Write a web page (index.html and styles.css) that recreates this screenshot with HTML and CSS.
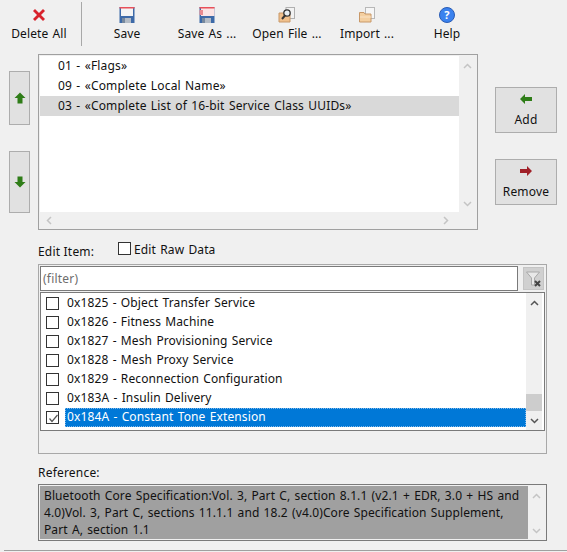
FILE: index.html
```html
<!DOCTYPE html>
<html lang="en">
<head>
    <meta charset="UTF-8">
    <title>Advertising Data Editor</title>
    <link rel="stylesheet" href="styles.css">
</head>
<body>

<div class="toolbar">
    <div class="tool tool-first">
        <svg width="16" height="16" viewBox="0 0 16 16"><path d="M2 4 4 2 8 6 12 2 14 4 10 8 14 12 12 14 8 10 4 14 2 12 6 8Z" fill="#d8222c"/></svg>
        <span>Delete All</span>
    </div>
    <div class="tool-sep"></div>
    <div class="tool">
        <svg width="16" height="16" viewBox="0 0 16 16"><rect x="0.500" y="0" width="15" height="16" fill="#3d6aa8"/><rect x="2" y="0" width="12" height="9" fill="#f4f4f4"/><rect x="0.500" y="0" width="15" height="1.500" fill="#e8505a"/><rect x="3" y="11" width="9" height="5" fill="#b4bcc6"/><rect x="3" y="11" width="3" height="5" fill="#76889e"/></svg>
        <span>Save</span>
    </div>
    <div class="tool">
        <svg width="16" height="16" viewBox="0 0 16 16"><rect x="0.500" y="0" width="15" height="16" fill="#3d6aa8"/><rect x="2" y="0" width="13.500" height="9" fill="#fbe4e4"/><rect x="0.500" y="0" width="15" height="1.500" fill="#e8505a"/><rect x="0.500" y="3" width="3.500" height="5" fill="#e88a90"/><rect x="3" y="11" width="9" height="5" fill="#b4bcc6"/><rect x="3" y="11" width="3" height="5" fill="#76889e"/></svg>
        <span>Save As ...</span>
    </div>
    <div class="tool">
        <svg width="18" height="16" viewBox="0 0 18 16"><rect x="8" y="0.500" width="8.500" height="11" fill="#f2f2f2" stroke="#b0b0b0"/><path d="M1 6H6L7 7.500H12V15H1Z" fill="#f0c08c" stroke="#c89868"/><circle cx="9" cy="6" r="3.200" fill="#e8eef2" stroke="#333" stroke-width="1.300"/><path d="M7 8.500 4 12" stroke="#333" stroke-width="2"/></svg>
        <span>Open File ...</span>
    </div>
    <div class="tool">
        <svg width="16" height="16" viewBox="0 0 16 16"><rect x="6.500" y="0.500" width="9" height="11" fill="#f6f6f6" stroke="#b8b8b8"/><path d="M0.500 5.500H5L6 7H12V15H0.500Z" fill="#f4cfa0" stroke="#c89868"/><path d="M1 10H12" stroke="#fae3c6"/></svg>
        <span>Import ...</span>
    </div>
    <div class="tool">
        <svg width="16" height="16" viewBox="0 0 16 16"><circle cx="8" cy="8" r="7.500" fill="#3b82ee" stroke="#2a5cb4"/><text x="8" y="12" class="help-mark">?</text></svg>
        <span>Help</span>
    </div>
</div>

<div class="top">
    <div class="move-col">
        <div class="btn move-up"><svg class="arrow" width="12" height="12" viewBox="0 0 12 12"><path d="M6 .5 11.500 6H8.500V11.500H3.500V6H.5Z" fill="#2f7d18"/></svg></div>
        <div class="btn move-down"><svg class="arrow" width="12" height="12" viewBox="0 0 12 12"><path d="M6 11.500 11.500 6H8.500V.5H3.500V6H.5Z" fill="#2f7d18"/></svg></div>
    </div>

    <div class="item-box">
        <div class="item-main">
            <ul class="item-list">
                <li>01 - «Flags»</li>
                <li>09 - «Complete Local Name»</li>
                <li class="current">03 - «Complete List of 16-bit Service Class UUIDs»</li>
            </ul>
            <div class="vbar">
                <svg class="chev" width="9" height="6" viewBox="0 0 9 6"><path d="M1 5 4.500 1.500 8 5" fill="none" stroke="#c4c4c4" stroke-width="1.500"/></svg>
                <svg class="chev" width="9" height="6" viewBox="0 0 9 6"><path d="M1 1 4.500 4.500 8 1" fill="none" stroke="#c4c4c4" stroke-width="1.500"/></svg>
            </div>
        </div>
        <div class="hbar">
            <svg width="6" height="9" viewBox="0 0 6 9"><path d="M5 1 1.500 4.500 5 8" fill="none" stroke="#c4c4c4" stroke-width="1.500"/></svg>
            <svg width="6" height="9" viewBox="0 0 6 9"><path d="M1 1 4.500 4.500 1 8" fill="none" stroke="#c4c4c4" stroke-width="1.500"/></svg>
        </div>
    </div>

    <div class="action-col">
        <div class="btn action">
            <svg width="12" height="10" viewBox="0 0 12 10"><path d="M0 5 5 0V3H12V7H5V10Z" fill="#2f7d18"/></svg>
            <span>Add</span>
        </div>
        <div class="btn action">
            <svg width="12" height="10" viewBox="0 0 12 10"><path d="M12 5 7 0V3H0V7H7V10Z" fill="#a02028"/></svg>
            <span>Remove</span>
        </div>
    </div>
</div>

<div class="edit-head">
    <span class="edit-label">Edit Item:</span>
    <label class="raw"><span class="check"></span><span class="raw-text">Edit Raw Data</span></label>
</div>

<div class="edit-box">
    <div class="filter-row">
        <div class="filter-input">(filter)</div>
        <div class="filter-btn">
            <svg width="18" height="18" viewBox="0 0 18 18"><path d="M1.500 2H14.500L9.500 8V15H6.500V8Z" fill="#e8e8e8" stroke="#a8a8a8"/><path d="M10 11 15 16M15 11 10 16" stroke="#444" stroke-width="2"/></svg>
        </div>
    </div>
    <div class="check-list">
        <ul class="services">
            <li><span class="check"></span><span class="name">0x1825 - Object Transfer Service</span></li>
            <li><span class="check"></span><span class="name">0x1826 - Fitness Machine</span></li>
            <li><span class="check"></span><span class="name">0x1827 - Mesh Provisioning Service</span></li>
            <li><span class="check"></span><span class="name">0x1828 - Mesh Proxy Service</span></li>
            <li><span class="check"></span><span class="name">0x1829 - Reconnection Configuration</span></li>
            <li><span class="check"></span><span class="name">0x183A - Insulin Delivery</span></li>
            <li class="picked">
                <span class="check"><svg width="13" height="13" viewBox="0 0 13 13"><path d="M2.500 6.500 5 9.500 10.500 3" fill="none" stroke="#555" stroke-width="1.200"/></svg></span>
                <span class="name">0x184A - Constant Tone Extension</span>
            </li>
        </ul>
        <div class="vbar vbar-dark">
            <svg class="chev" width="9" height="6" viewBox="0 0 9 6"><path d="M1 5 4.500 1.500 8 5" fill="none" stroke="#555" stroke-width="1.500"/></svg>
            <div class="thumb"></div>
            <svg class="chev" width="9" height="6" viewBox="0 0 9 6"><path d="M1 1 4.500 4.500 8 1" fill="none" stroke="#555" stroke-width="1.500"/></svg>
        </div>
    </div>
</div>

<div class="ref-label">Reference:</div>
<div class="ref-box">
    <div class="ref-text">Bluetooth Core Specification:Vol. 3, Part C, section 8.1.1 (v2.1 + EDR, 3.0 + HS and 4.0)Vol. 3, Part C, sections 11.1.1 and 18.2 (v4.0)Core Specification Supplement, Part A, section 1.1</div>
    <div class="vbar">
        <svg class="chev" width="9" height="6" viewBox="0 0 9 6"><path d="M1 5 4.500 1.500 8 5" fill="none" stroke="#c4c4c4" stroke-width="1.500"/></svg>
        <svg class="chev" width="9" height="6" viewBox="0 0 9 6"><path d="M1 1 4.500 4.500 8 1" fill="none" stroke="#c4c4c4" stroke-width="1.500"/></svg>
    </div>
</div>
<div class="bottom-line"></div>

</body>
</html>
```

FILE: styles.css
```css
/*reset*/
*{margin: 0;padding: 0;list-style: none;box-sizing: border-box;}
html,body{height: 552px;overflow: hidden;}
body{background: #f0f0f0;color: #111;font: 12px/16px "Noto Sans","Open Sans",sans-serif;}

/*toolbar*/
.toolbar{display: flex;height: 48px;padding-top: 2px;}
.tool{width: 80px;display: flex;flex-direction: column;align-items: center;padding-top: 5px;gap: 3px;letter-spacing: .1px;word-spacing: 1px;}
.tool svg{height: 16px;}
.tool-first{width: 78px;}
.tool-sep{width: 1px;height: 44px;background: #a8a8a8;margin: 0 5px 0 3px;}
.help-mark{font: bold 11px "Noto Sans",sans-serif;fill: #fff;text-anchor: middle;}

/*top part: move buttons, list, add/remove*/
.top{display: flex;height: 176px;margin-top: 6px;padding-left: 9px;}
.btn{background: #e1e1e1;border: 1px solid #adadad;display: flex;align-items: center;justify-content: center;}
.move-col{width: 21px;margin-right: 8px;display: flex;flex-direction: column;padding-top: 17px;gap: 26px;}
.move-up{height: 54px;}
.move-down{height: 62px;}
.item-box{width: 440px;border: 1px solid #a0a0a0;background: #f0f0f0;padding: 1px;display: flex;flex-direction: column;}
.item-main{flex: 1;display: flex;min-height: 0;}
.item-list{flex: 1;background: #fff;letter-spacing: .16px;word-spacing: 1px;}
.item-list li{height: 20px;line-height: 20px;padding-left: 18px;}
.item-list li.current{background: #d9d9d9;margin-right: 0;}
.vbar{width: 17px;display: flex;flex-direction: column;justify-content: space-between;align-items: center;padding: 7px 0 5px;background: #f0f0f0;}
.hbar{height: 16px;display: flex;justify-content: space-between;align-items: center;padding: 0 27px 0 6px;background: #f0f0f0;}
.action-col{margin-left: 17px;width: 62px;display: flex;flex-direction: column;padding-top: 33px;gap: 26px;}
.action{height: 46px;flex-direction: column;gap: 8px;font-size: 12px;padding-top: 4px;letter-spacing: .2px;}
.action svg{margin-top: -2px;}

/*edit item*/
.edit-head{display: flex;height: 34px;padding: 12px 0 0 38px;}
.edit-label{width: 80px;padding-top: 2px;letter-spacing: .2px;}
.raw{display: flex;align-items: flex-start;gap: 3px;}
.raw-text{letter-spacing: .12px;word-spacing: 1px;}
.check{width: 13px;height: 13px;border: 1px solid #333;background: #fff;display: block;flex: none;}
.edit-box{margin-left: 38px;width: 509px;height: 190px;border: 1px solid #a8a8a8;padding: 1px;}
.filter-row{display: flex;height: 26px;}
.filter-input{width: 478px;height: 25px;border: 1px solid #7a7a7a;background: #fff;color: #6d6d6d;line-height: 23px;padding-left: 2px;letter-spacing: .2px;}
.filter-btn{width: 21px;height: 23px;margin: 1px 0 0 5px;background: #d0d0d0;border: 1px solid #c4c4c4;display: flex;align-items: center;justify-content: center;}
.check-list{width: 505px;height: 139px;border: 1px solid #7a7a7a;background: #fff;display: flex;}
.services{flex: 1;padding-top: 1px;letter-spacing: .12px;word-spacing: 1px;}
.services li{height: 19px;display: flex;align-items: center;padding-left: 5px;gap: 6px;}
.name{flex: 1;line-height: 18px;height: 19px;padding-left: 2px;}
.picked .name{background: #0078d7;color: #fff;outline: 1px dotted #7fb8ea;outline-offset: -1px;}
.vbar-dark{width: 16px;margin-right: 2px;position: relative;padding: 7px 0 6px;}
.thumb{position: absolute;left: 0;right: 0;bottom: 19px;height: 17px;background: #cdcdcd;}

/*reference*/
.ref-label{margin: 11px 0 0 38px;height: 19px;line-height: 16px;letter-spacing: .2px;}
.ref-box{margin-left: 38px;width: 509px;height: 57px;border: 1px solid #7a7a7a;background: #f0f0f0;padding: 1px;display: flex;}
.ref-text{flex: 1;background: #a0a0a0;padding: 1px 3px 0 4px;line-height: 17px;letter-spacing: .1px;word-spacing: 1px;}
.bottom-line{margin: 9px 0 0 4px;height: 1px;background: #a0a0a0;}
```
